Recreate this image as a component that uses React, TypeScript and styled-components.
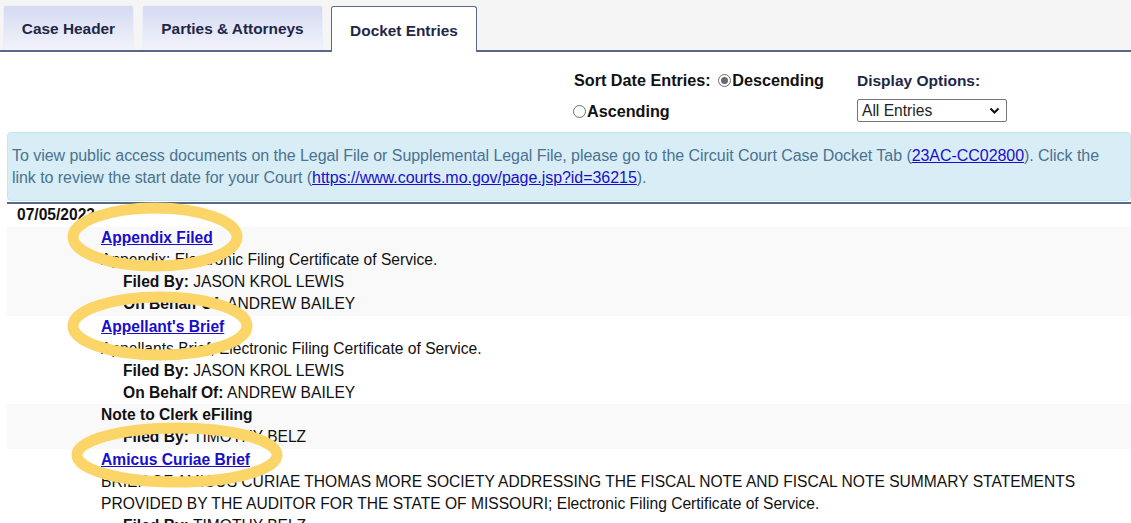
import React from 'react';
import styled, { createGlobalStyle } from 'styled-components';

const GlobalStyle = createGlobalStyle`
  html, body {
    margin: 0;
    padding: 0;
    background: #ffffff;
    font-family: "Liberation Sans", Arial, sans-serif;
    overflow: hidden;
  }
`;

const Page = styled.div`
  position: relative;
  width: 1131px;
  height: 523px;
  overflow: hidden;
`;

const TabBar = styled.div`
  display: flex;
  align-items: flex-end;
  gap: 8px;
  height: 52px;
  padding-left: 3px;
  background: #f5f5f5;
  border-bottom: 2px solid #5b6889;
  box-sizing: border-box;
`;

const Tab = styled.div<{ active?: boolean; w: number }>`
  display: flex;
  align-items: center;
  justify-content: center;
  width: ${p => p.w}px;
  height: ${p => (p.active ? 46 : 45)}px;
  box-sizing: border-box;
  font-size: 15.4px;
  font-weight: bold;
  color: #1f2748;
  border-radius: 3px 3px 0 0;
  background: ${p => (p.active ? '#ffffff' : 'linear-gradient(#d5daf2, #f2f3fb)')};
  border: ${p => (p.active ? '1px solid #5b6889' : '1px solid #eceef8')};
  border-bottom: none;
  margin-bottom: ${p => (p.active ? '-2px' : '0')};
  padding-top: 2px;
`;

const Content = styled.div`
  margin-left: 7px;
`;

const Controls = styled.div`
  display: flex;
  justify-content: flex-end;
  gap: 27px;
  padding: 14px 124px 0 0;
  height: 80px;
  box-sizing: border-box;
`;

const SortGroup = styled.div`
  width: 256px;
  font-size: 16.2px;
  font-weight: bold;
  color: #111;
  line-height: 31px;
  margin-top: -1px;
`;

const RadioRow = styled.div<{ indent?: number }>`
  display: flex;
  align-items: center;
  margin-left: ${p => p.indent ?? 0}px;
`;

const Radio = styled.span<{ checked?: boolean }>`
  display: inline-block;
  width: 13px;
  height: 13px;
  border-radius: 50%;
  border: 1px solid #6e6e6e;
  box-sizing: border-box;
  margin: 0 1px 0 3px;
  position: relative;
  background: #fff;
  &::after {
    content: '';
    display: ${p => (p.checked ? 'block' : 'none')};
    position: absolute;
    left: 2px;
    top: 2px;
    width: 7px;
    height: 7px;
    border-radius: 50%;
    background: #6b6b6b;
  }
`;

const DisplayGroup = styled.div`
  display: flex;
  flex-direction: column;
  gap: 9px;
  margin-top: 6px;
`;

const DisplayLabel = styled.div`
  font-size: 15.5px;
  line-height: 18px;
  font-weight: bold;
  color: #1f2748;
`;

const Select = styled.div`
  display: flex;
  align-items: center;
  justify-content: space-between;
  width: 150px;
  height: 23px;
  box-sizing: border-box;
  padding: 0 6px 0 4px;
  border: 1px solid #767676;
  border-radius: 2px;
  font-size: 15.6px;
  color: #222;
  background: #fff;
`;

const InfoBox = styled.div`
  background: #d9edf7;
  border: 1px solid #bce8f1;
  border-radius: 4px;
  padding: 12px 4px 11px 4px;
  font-size: 16px;
  letter-spacing: -0.05px;
  line-height: 22px;
  color: #4a7390;
  white-space: nowrap;
`;

const InfoLink = styled.a`
  color: #1a0dcc;
  text-decoration: underline;
`;

const Divider = styled.div`
  height: 2px;
  background: #5b6787;
  margin-top: 1px;
`;

const DateRow = styled.div`
  font-size: 15.6px;
  font-weight: bold;
  color: #111;
  line-height: 22px;
  padding: 0 0 1px 10px;
`;

const Entry = styled.div<{ shaded?: boolean }>`
  background: ${p => (p.shaded ? '#f9f9f9' : '#ffffff')};
  padding: 0 0 0.7px 94px;
  font-size: 15.6px;
  line-height: 22px;
  color: #111;
`;

const EntryTitle = styled.a`
  display: block;
  font-weight: bold;
  color: #1a0dcc;
  text-decoration: underline;
`;

const EntryPlain = styled.div`
  font-weight: bold;
`;

const Detail = styled.div<{ indent?: boolean }>`
  padding-left: ${p => (p.indent ? 22 : 0)}px;
  white-space: nowrap;
`;

const Label = styled.b`
  font-weight: bold;
`;

const Annotations = styled.svg`
  position: absolute;
  left: 0;
  top: 0;
  pointer-events: none;
`;

type EntryData = {
  title: string;
  link: boolean;
  desc?: string[];
  filedBy: string;
  onBehalf?: string;
  shaded: boolean;
};

const entries: EntryData[] = [
  {
    title: 'Appendix Filed',
    link: true,
    desc: ['Appendix: Electronic Filing Certificate of Service.'],
    filedBy: 'JASON KROL LEWIS',
    onBehalf: 'ANDREW BAILEY',
    shaded: true,
  },
  {
    title: "Appellant's Brief",
    link: true,
    desc: ['Appellants Brief; Electronic Filing Certificate of Service.'],
    filedBy: 'JASON KROL LEWIS',
    onBehalf: 'ANDREW BAILEY',
    shaded: false,
  },
  {
    title: 'Note to Clerk eFiling',
    link: false,
    filedBy: 'TIMOTHY BELZ',
    shaded: true,
  },
  {
    title: 'Amicus Curiae Brief',
    link: true,
    desc: [
      'BRIEF OF AMICUS CURIAE THOMAS MORE SOCIETY ADDRESSING THE FISCAL NOTE AND FISCAL NOTE SUMMARY STATEMENTS',
      'PROVIDED BY THE AUDITOR FOR THE STATE OF MISSOURI; Electronic Filing Certificate of Service.',
    ],
    filedBy: 'TIMOTHY BELZ',
    shaded: false,
  },
];

// hand-drawn highlight rings over the three linked entries
const circles = [
  { cx: 155, cy: 237, rx: 82, ry: 29 },
  { cx: 160, cy: 326, rx: 87, ry: 29 },
  { cx: 177, cy: 455, rx: 100, ry: 27 },
];

const App: React.FC = () => {
  return (
    <Page>
      <GlobalStyle />
      <TabBar>
        <Tab w={131}>Case Header</Tab>
        <Tab w={181}>Parties &amp; Attorneys</Tab>
        <Tab w={146} active>Docket Entries</Tab>
      </TabBar>
      <Content>
        <Controls>
          <SortGroup>
            <RadioRow>
              Sort Date Entries:&nbsp;<Radio checked />Descending
            </RadioRow>
            <RadioRow indent={-4}>
              <Radio />Ascending
            </RadioRow>
          </SortGroup>
          <DisplayGroup>
            <DisplayLabel>Display Options:</DisplayLabel>
            <Select>
              All Entries
              <svg width="11" height="8" viewBox="0 0 11 8">
                <path d="M1.5 1.5 L5.5 5.5 L9.5 1.5" fill="none" stroke="#111" strokeWidth="2" />
              </svg>
            </Select>
          </DisplayGroup>
        </Controls>
        <InfoBox>
          To view public access documents on the Legal File or Supplemental Legal File, please go to the Circuit Court Case Docket Tab (
          <InfoLink href="#">23AC-CC02800</InfoLink>). Click the
          <br />
          link to review the start date for your Court (
          <InfoLink href="#">https://www.courts.mo.gov/page.jsp?id=36215</InfoLink>).
        </InfoBox>
        <Divider />
        <DateRow>07/05/2023</DateRow>
        {entries.map(e => (
          <Entry key={e.title} shaded={e.shaded}>
            {e.link ? <EntryTitle href="#">{e.title}</EntryTitle> : <EntryPlain>{e.title}</EntryPlain>}
            {e.desc?.map(d => (
              <Detail key={d}>{d}</Detail>
            ))}
            <Detail indent>
              <Label>Filed By:</Label> {e.filedBy}
            </Detail>
            {e.onBehalf && (
              <Detail indent>
                <Label>On Behalf Of:</Label> {e.onBehalf}
              </Detail>
            )}
          </Entry>
        ))}
      </Content>
      <Annotations width="1131" height="523">
        {circles.map((c, i) => (
          <ellipse
            key={i}
            cx={c.cx}
            cy={c.cy}
            rx={c.rx}
            ry={c.ry}
            fill="none"
            stroke="#fbd568"
            strokeWidth="11"
          />
        ))}
      </Annotations>
    </Page>
  );
};

export default App;
